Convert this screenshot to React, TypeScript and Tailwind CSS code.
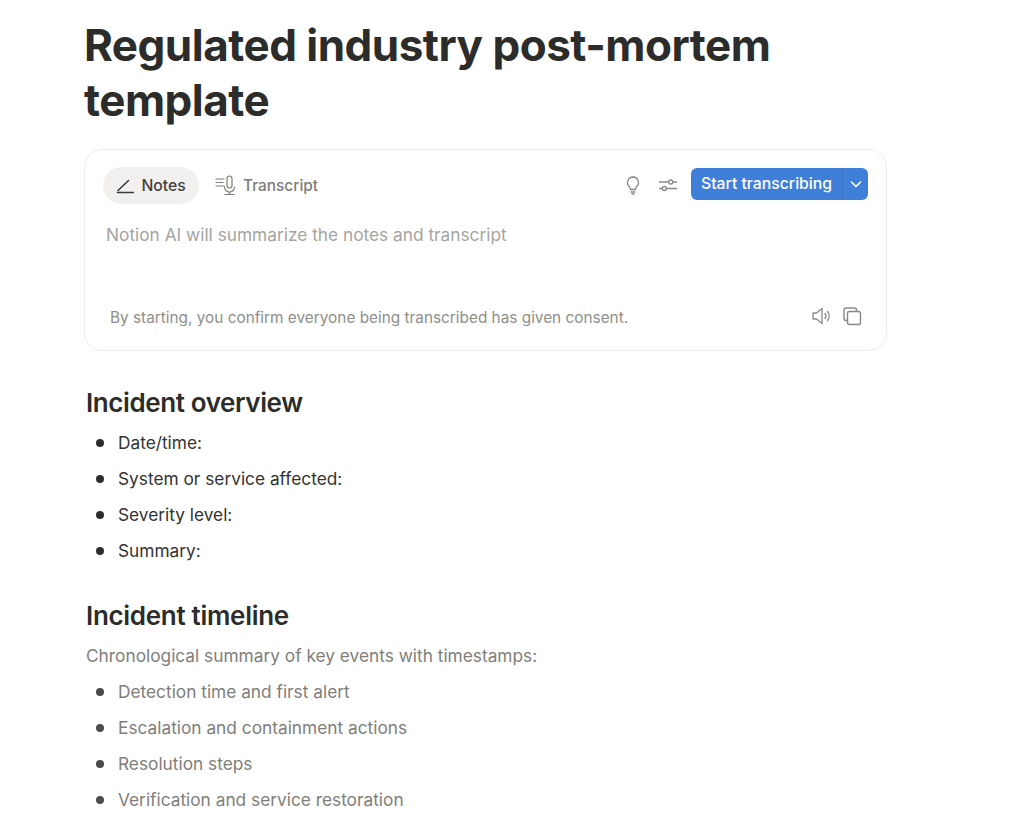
const sans = 'font-["Inter","Liberation_Sans",sans-serif]';

function Bullet({ text, muted }: { text: string; muted?: boolean }) {
  return (
    <li className="flex h-9 items-center">
      <span className={`ml-[10px] mr-[14px] h-[8px] w-[8px] rounded-full ${muted ? "bg-[#4a4a48]" : "bg-[#2e2e2c]"}`}></span>
      <span className={`text-[17.300px] ${muted ? "text-[#7f7e7a]" : "text-[#333331]"}`}>{text}</span>
    </li>
  );
}

function Tabs() {
  return (
    <div className="flex items-center">
      <div className="flex h-[37px] w-[96px] items-center justify-center gap-[7px] rounded-full bg-[#f1f0ee]">
        <svg className="h-[18px] w-[18px] text-[#3a3a38]" fill="none" stroke="currentColor" viewBox="0 0 18 18" strokeWidth={1.6} strokeLinecap="round">
          <path d="M1.500 15.500h16M2 13.500 12.500 3.500" />
        </svg>
        <span className="text-[15.700px] font-medium text-[#41413f]">Notes</span>
      </div>
      <div className="ml-[16px] flex items-center gap-[6px]">
        <svg className="h-[22px] w-[22px] text-[#7d7c78]" fill="none" stroke="currentColor" viewBox="0 0 22 22" strokeWidth={1.2} strokeLinecap="round">
          <path d="M1 5h8M1 8.500h7M1 12h8" />
          <rect x="12" y="2" width="5" height="12" rx="2.500" />
          <path d="M9.500 13a5 5 0 0 0 10 0M14.500 18v2M10 20.500h9" />
        </svg>
        <span className="text-[15.400px] font-medium text-[#7d7c78]">Transcript</span>
      </div>
    </div>
  );
}

function Actions() {
  return (
    <div className="flex items-start pt-px">
      <svg className="mt-[7px] h-5 w-5 text-[#8a8985]" fill="none" stroke="currentColor" viewBox="0 0 20 20" strokeWidth={1.3} strokeLinecap="round">
        <path d="M10 2a5.500 5.500 0 0 0-3.500 9.700c.6.6.9 1.700 1 2.800h5c.1-1.100.4-2.200 1-2.800A5.500 5.500 0 0 0 10 2ZM8 17h4M9 19h2" />
      </svg>
      <svg className="mt-[7px] ml-[15px] h-5 w-5 text-[#8a8985]" fill="none" stroke="currentColor" viewBox="0 0 20 20" strokeWidth={1.3} strokeLinecap="round">
        <path d="M1.500 7h9M15 7h3.500M1.500 13.500H4M8.500 13.500h10" />
        <circle cx="12.700" cy="7" r="2" />
        <circle cx="6.300" cy="13.500" r="2" />
      </svg>
      <div className="ml-[13px] flex h-[32px] w-[177px] items-center rounded-[6px] bg-[#3f7fd9] text-white">
        <span className="flex-1 pl-[10px] text-[15.750px] font-medium">Start transcribing</span>
        <span className="flex h-full w-[26px] items-center justify-center border-l border-[#3a73c4]">
          <svg className="h-[14px] w-[14px]" fill="none" stroke="currentColor" viewBox="0 0 14 14" strokeWidth={1.6} strokeLinecap="round" strokeLinejoin="round">
            <path d="m2.500 5 4.500 4.500L11.500 5" />
          </svg>
        </span>
      </div>
    </div>
  );
}

function FooterIcons() {
  return (
    <div className="mb-[4px] flex items-center gap-[10px] pr-[6px]">
      <svg className="h-5 w-5 text-[#8a8985]" fill="none" stroke="currentColor" viewBox="0 0 20 20" strokeWidth={1.3} strokeLinecap="round" strokeLinejoin="round">
        <path d="M1 7v6h3.500L10 17.500v-15L4.500 7ZM13 7.500a4 4 0 0 1 0 5M15.500 5.500a7 7 0 0 1 0 9" />
      </svg>
      <svg className="h-5 w-5 text-[#8a8985]" fill="none" stroke="currentColor" viewBox="0 0 20 20" strokeWidth={1.4}>
        <rect x="5.500" y="5.500" width="13" height="13" rx="2" />
        <path d="M5.500 14.500H4a2 2 0 0 1-2-2V4a2 2 0 0 1 2-2h8.500a2 2 0 0 1 2 2v1.500" />
      </svg>
    </div>
  );
}

export default function App() {
  return (
    <div className={`h-[826px] overflow-hidden bg-white pl-[84px] ${sans}`}>
      <h1 className="w-[803px] pt-[18px] text-[44px] leading-[55px] font-bold tracking-[-0.5px] text-[#2c2c2a]">
        Regulated industry post-mortem template
      </h1>

      <div className="mt-[21px] flex h-[202px] w-[803px] flex-col rounded-[18px] border border-[#ededeb] pt-[17px] pr-[18px] pl-[18px]">
        <div className="flex items-start justify-between">
          <Tabs />
          <Actions />
        </div>
        <p className="mt-[19px] pl-[3px] text-[17.300px] leading-[24px] text-[#a5a4a0]">
          Notion AI will summarize the notes and transcript
        </p>
        <div className="mt-[59px] flex items-center justify-between pl-[7px]">
          <p className="text-[15.350px] text-[#8f8e8a]">
            By starting, you confirm everyone being transcribed has given consent.
          </p>
          <FooterIcons />
        </div>
      </div>

      <div className="pl-[2px]">
        <h2 className="mt-[35px] text-[26px] leading-[34px] font-semibold tracking-[-0.4px] text-[#2c2c2a]">Incident overview</h2>
        <ul className="mt-[5px]">
          <Bullet text="Date/time:" />
          <Bullet text="System or service affected:" />
          <Bullet text="Severity level:" />
          <Bullet text="Summary:" />
        </ul>
        <h2 className="mt-[30px] text-[26px] leading-[34px] font-semibold tracking-[-0.3px] text-[#2c2c2a]">Incident timeline</h2>
        <p className="mt-[9px] text-[17.300px] leading-[28px] text-[#7f7e7a]">Chronological summary of key events with timestamps:</p>
        <ul className="mt-[4px]">
          <Bullet muted text="Detection time and first alert" />
          <Bullet muted text="Escalation and containment actions" />
          <Bullet muted text="Resolution steps" />
          <Bullet muted text="Verification and service restoration" />
        </ul>
      </div>
    </div>
  );
}
